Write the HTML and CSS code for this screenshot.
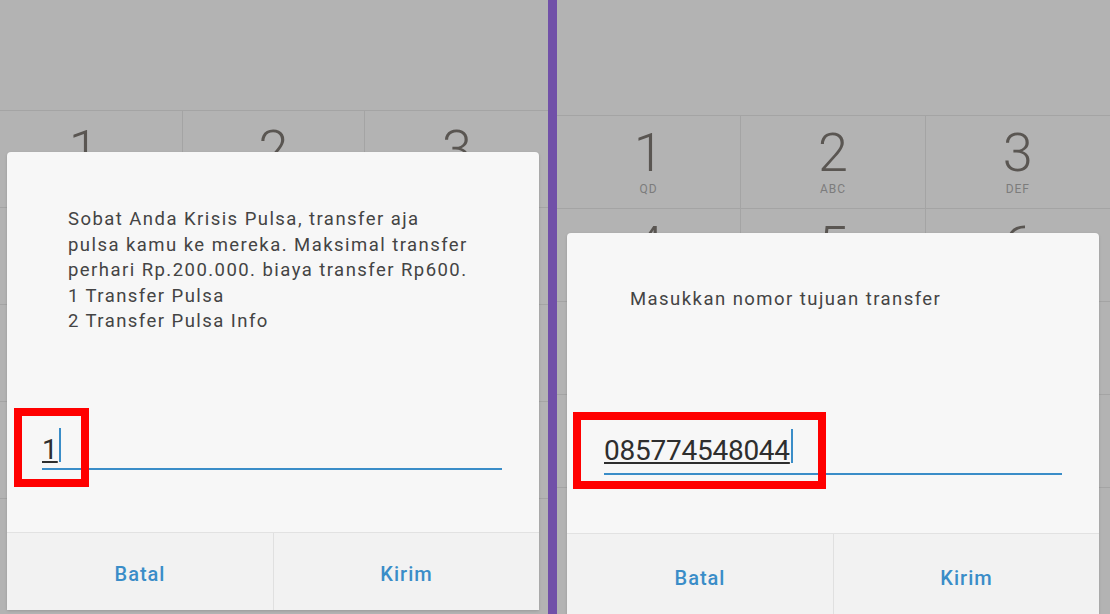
FILE: index.html
```html
<!DOCTYPE html>
<html>
<head>
  <title>Transfer Pulsa</title>
  <link rel="stylesheet" href="styles.css">
</head>
<body>
  <div class="screens">

    <!-- step 1: pick the menu option -->
    <section class="phone phone-left">
      <div class="display"></div>
      <div class="keypad">
        <div class="key"><span class="digit">1</span></div>
        <div class="key"><span class="digit">2</span></div>
        <div class="key"><span class="digit">3</span></div>
        <div class="key"></div>
        <div class="key"></div>
        <div class="key"></div>
        <div class="key"></div>
        <div class="key"></div>
        <div class="key"></div>
        <div class="key"></div>
        <div class="key"></div>
        <div class="key"></div>
      </div>

      <div class="dialog dialog-menu">
        <div class="dialog-body">
          <p class="message">Sobat Anda Krisis Pulsa, transfer aja<br>
            pulsa kamu ke mereka. Maksimal transfer<br>
            perhari Rp.200.000. biaya transfer Rp600.<br>
            1 Transfer Pulsa<br>
            2 Transfer Pulsa Info</p>
          <div class="field">
            <span class="typed">1</span><span class="caret"></span>
          </div>
        </div>
        <div class="actions">
          <button class="action">Batal</button>
          <button class="action">Kirim</button>
        </div>
        <div class="highlight"></div>
      </div>
    </section>

    <div class="divider"></div>

    <!-- step 2: enter the destination number -->
    <section class="phone phone-right">
      <div class="display"></div>
      <div class="keypad">
        <div class="key"><span class="digit">1</span><span class="letters">QD</span></div>
        <div class="key"><span class="digit">2</span><span class="letters">ABC</span></div>
        <div class="key"><span class="digit">3</span><span class="letters">DEF</span></div>
        <div class="key"><span class="digit">4</span></div>
        <div class="key"><span class="digit">5</span></div>
        <div class="key"><span class="digit">6</span></div>
        <div class="key"></div>
        <div class="key"></div>
        <div class="key"></div>
        <div class="key"></div>
        <div class="key"></div>
        <div class="key"></div>
      </div>

      <div class="dialog dialog-number">
        <div class="dialog-body">
          <p class="message">Masukkan nomor tujuan transfer</p>
          <div class="field">
            <span class="typed">085774548044</span><span class="caret"></span>
          </div>
        </div>
        <div class="actions">
          <button class="action">Batal</button>
          <button class="action">Kirim</button>
        </div>
        <div class="highlight"></div>
      </div>
    </section>

  </div>
</body>
</html>
```

FILE: styles.css
```css
:root {
  --screen-gray: #b3b3b3;
  --key-line: #a4a4a4;
  --dialog-bg: #f7f7f7;
  --actions-bg: #f2f2f2;
  --accent: #3a8dc8;
  --text: #444444;
  --purple: #7150a8;
}

* {
  margin: 0;
  padding: 0;
  box-sizing: border-box;
}

body {
  background-color: var(--screen-gray);
  font-family: Roboto, "Noto Sans", sans-serif;
  overflow: hidden;
}

.screens {
  display: flex;
  width: 1110px;
  height: 614px;
  overflow: hidden;
}

.phone {
  position: relative;
  background-color: var(--screen-gray);
  overflow: hidden;
}

.phone-left {
  width: 548px;
}

.phone-right {
  flex: 1;
}

.divider {
  width: 9px;
  background-color: var(--purple);
}

.phone-left .display {
  height: 110px;
}

.phone-right .display {
  height: 115px;
}

/* dial pad behind the dialogs */
.keypad {
  display: grid;
  grid-template-columns: repeat(3, 1fr);
  border-top: 1px solid var(--key-line);
}

.key {
  height: 93px;
  display: flex;
  flex-direction: column;
  align-items: center;
  padding-top: 10px;
  border-right: 1px solid var(--key-line);
  border-bottom: 1px solid var(--key-line);
}

.phone-left .key {
  height: 97px;
  padding-top: 12px;
}

.phone-left .key:first-child {
  padding-right: 14px;
}

.key:nth-child(3n) {
  border-right: none;
}

.digit {
  font-size: 54px;
  font-weight: 300;
  line-height: 1;
  color: #5a5652;
}

.letters {
  margin-top: 2px;
  font-size: 12px;
  line-height: 14px;
  letter-spacing: 1px;
  color: #7c7c7c;
}

/* USSD dialog */
.dialog {
  position: absolute;
  width: 532px;
  display: flex;
  flex-direction: column;
  background-color: var(--dialog-bg);
  border-radius: 4px 4px 2px 2px;
  box-shadow: 0 1px 3px rgba(0, 0, 0, 0.15);
}

.dialog-menu {
  left: 7px;
  top: 152px;
  height: 458px;
}

.dialog-number {
  left: 10px;
  top: 233px;
  height: 388px;
}

.dialog-body {
  flex: 1;
  padding: 0 37px 0 35px;
}

.message {
  margin-left: 26px;
  font-size: 18.5px;
  line-height: 25.5px;
  letter-spacing: 1.45px;
  color: var(--text);
}

.dialog-menu .dialog-body {
  padding-top: 55px;
}

.dialog-number .dialog-body {
  padding-top: 54px;
  padding-left: 37px;
}

.field {
  border-bottom: 2px solid var(--accent);
  white-space: nowrap;
}

.dialog-menu .field {
  margin-top: 86px;
  padding: 7px 0 1px;
}

.dialog-number .field {
  margin-top: 113px;
  padding: 3px 0 5px;
}

.typed {
  font-size: 28px;
  line-height: 34px;
  color: #2e2e2e;
  text-decoration: underline;
  text-decoration-thickness: 1.5px;
  text-underline-offset: 2px;
}

.dialog-number .typed {
  letter-spacing: -0.25px;
}

.caret {
  display: inline-block;
  width: 2px;
  height: 34px;
  margin-left: 1px;
  vertical-align: -3px;
  background-color: var(--accent);
}

.actions {
  display: grid;
  grid-template-columns: 1fr 1fr;
  background-color: var(--actions-bg);
  border-top: 1px solid #e2e2e2;
}

.dialog-menu .actions {
  height: 78px;
}

.dialog-number .actions {
  height: 88px;
}

.action {
  border: none;
  background: none;
  font-family: Roboto, "Noto Sans", sans-serif;
  font-size: 20px;
  font-weight: 500;
  letter-spacing: 1px;
  color: var(--accent);
}

.dialog-menu .action {
  padding-top: 5px;
}

.action + .action {
  border-left: 1px solid #e0e0e0;
}

/* red marker around the typed input */
.highlight {
  position: absolute;
  border: 8px solid #ff0000;
}

.dialog-menu .highlight {
  left: 7px;
  top: 256px;
  width: 75px;
  height: 79px;
}

.dialog-number .highlight {
  left: 6px;
  top: 179px;
  width: 253px;
  height: 77px;
}
```
